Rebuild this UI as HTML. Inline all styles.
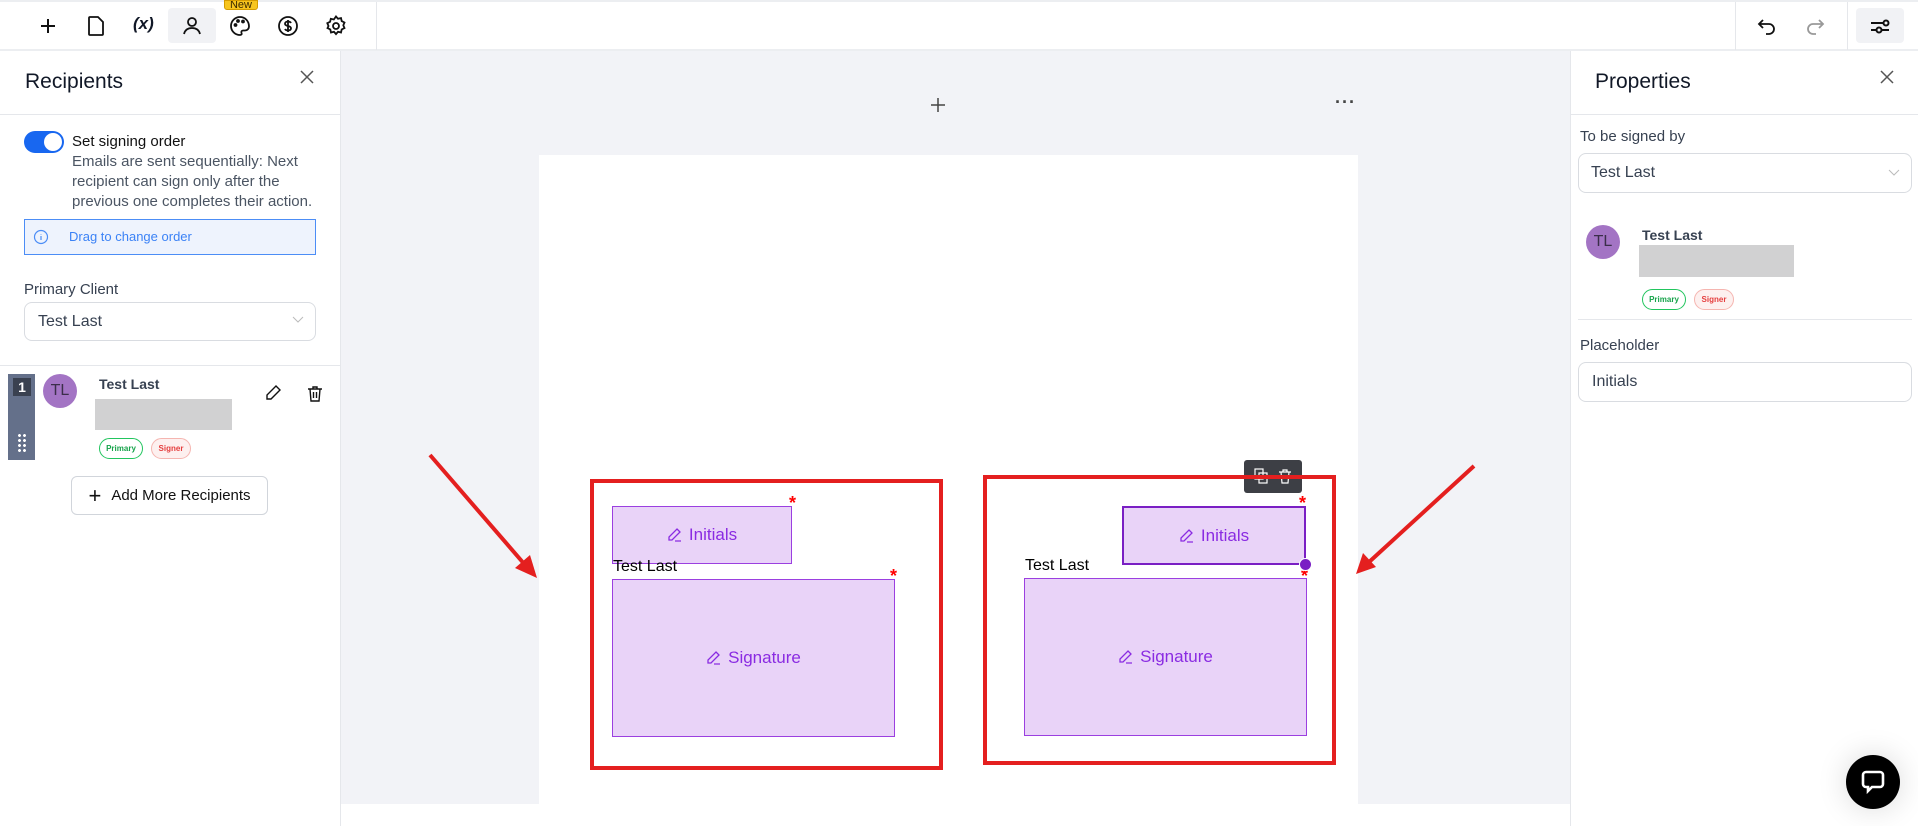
<!DOCTYPE html>
<html><head><meta charset="utf-8"><style>
*{box-sizing:border-box;margin:0;padding:0}
body{width:1918px;height:826px;position:relative;overflow:hidden;background:#fff;font-family:"Liberation Sans",sans-serif;color:#111827}
.a{position:absolute}
.ic{position:absolute;width:24px;height:24px}
.sel{position:absolute;border:1px solid #d9dce1;border-radius:8px;background:#fff;font-size:16px;color:#374151;padding-left:13px;display:flex;align-items:center}
.badge{position:absolute;height:21px;border-radius:11px;font-size:8px;font-weight:bold;display:flex;align-items:center;justify-content:center}
.fld{position:absolute;background:#e9d3f8;border:1px solid #9b3fe0;display:flex;align-items:center;justify-content:center;color:#8a2be2;font-size:17px;gap:6px}
.ast{position:absolute;color:#f00;font-size:18px;font-weight:bold}
.tl{position:absolute;font-size:16px;color:#000}
</style></head><body>
<div class="a" style="left:0;top:0;width:1918px;height:51px;border-top:2px solid #eceef1;border-bottom:2px solid #eceef1"></div>
<div class="a" style="left:376px;top:2px;width:1px;height:48px;background:#e5e7eb"></div>
<div class="a" style="left:1735px;top:2px;width:1px;height:48px;background:#e5e7eb"></div>
<div class="a" style="left:1847px;top:2px;width:1px;height:48px;background:#e5e7eb"></div>
<div class="a" style="left:168px;top:8px;width:48px;height:35px;background:#f1f2f5;border-radius:4px"></div>
<div class="a" style="left:1856px;top:8px;width:48px;height:35px;background:#f1f2f5;border-radius:4px"></div>
<div class="a" style="left:224px;top:0;width:34px;height:10px;background:#f7c51e;border:1px solid #d49b00;border-radius:0 0 3px 3px;font-size:11px;line-height:8px;text-align:center;color:#3b2a00;overflow:hidden">New</div>
<svg class="ic" style="left:36px;top:14px" viewBox="0 0 24 24" fill="none" stroke="#111" stroke-width="2"><path d="M12 5v14M5 12h14"/></svg>
<svg class="ic" style="left:84px;top:14px" viewBox="0 0 24 24" fill="none" stroke="#111" stroke-width="1.8"><path d="M6 3h8l5 5v12a1 1 0 0 1-1 1H6a1 1 0 0 1-1-1V4a1 1 0 0 1 1-1z"/></svg>
<div class="a" style="left:133px;top:14px;font-size:17px;font-weight:bold;font-style:italic">(x)</div>
<svg class="ic" style="left:180px;top:14px" viewBox="0 0 24 24" fill="none" stroke="#111" stroke-width="1.8"><circle cx="12" cy="8" r="4"/><path d="M4 20c1-4 4-6 8-6s7 2 8 6"/></svg>
<svg class="ic" style="left:228px;top:14px" viewBox="0 0 24 24" fill="none" stroke="#111" stroke-width="1.8"><path d="M12 3a9 9 0 1 0 0 18c1.5 0 2-1 1.5-2s0-2.5 1.5-2.5h2a4 4 0 0 0 4-4C21 7 17 3 12 3z"/><circle cx="7.5" cy="11" r="1"/><circle cx="10" cy="7" r="1"/><circle cx="15" cy="7.5" r="1"/></svg>
<svg class="ic" style="left:276px;top:14px" viewBox="0 0 24 24" fill="none" stroke="#111" stroke-width="1.8"><circle cx="12" cy="12" r="9"/><path d="M15 9c-.5-1-1.5-1.5-3-1.5-2 0-3 1-3 2.2s1 1.8 3 2.3 3 1 3 2.3-1 2.2-3 2.2c-1.5 0-2.5-.5-3-1.5M12 6v12"/></svg>
<svg class="ic" style="left:324px;top:14px" viewBox="0 0 24 24" fill="none" stroke="#111" stroke-width="1.8"><circle cx="12" cy="12" r="3"/><path d="M12 2.5l2 2.3 3-.7.7 3 2.8 1.4-1.2 2.8 1.2 2.8-2.8 1.4-.7 3-3-.7-2 2.3-2-2.3-3 .7-.7-3-2.8-1.4L4.5 12 3.3 9.2l2.8-1.4.7-3 3 .7z"/></svg>
<svg class="ic" style="left:1755px;top:14px" viewBox="0 0 24 24" fill="none" stroke="#111" stroke-width="1.8"><path d="M8 6L4 10l4 4M4 10h10a5 5 0 0 1 0 10h-3"/></svg>
<svg class="ic" style="left:1803px;top:14px" viewBox="0 0 24 24" fill="none" stroke="#999" stroke-width="1.8"><path d="M16 6l4 4-4 4M20 10H10a5 5 0 0 0 0 10h3"/></svg>
<svg class="ic" style="left:1868px;top:14px" viewBox="0 0 24 24" fill="none" stroke="#111" stroke-width="2"><path d="M3 9h12M3 16h5M14 16h7"/><circle cx="18" cy="9" r="2.5"/><circle cx="11" cy="16" r="2.5"/></svg>

<div class="a" style="left:0;top:51px;width:341px;height:775px;border-right:1px solid #e5e7eb;background:#fff"></div>
<div class="a" style="left:25px;top:70px;font-size:21px">Recipients</div>
<svg class="ic" style="left:298px;top:68px;width:18px;height:18px" viewBox="0 0 18 18" stroke="#555" stroke-width="1.5"><path d="M3 3l12 12M15 3L3 15"/></svg>
<div class="a" style="left:0;top:114px;width:340px;height:1px;background:#e5e7eb"></div>
<div class="a" style="left:24px;top:131px;width:40px;height:22px;background:#1867f0;border-radius:11px"><div class="a" style="left:20px;top:2px;width:18px;height:18px;border-radius:50%;background:#fff"></div></div>
<div class="a" style="left:72px;top:133px;font-size:15px;color:#111">Set signing order</div>
<div class="a" style="left:72px;top:152px;font-size:15px;line-height:20px;color:#4b5563;width:250px">Emails are sent sequentially: Next recipient can sign only after the previous one completes their action.</div>
<div class="a" style="left:24px;top:219px;width:292px;height:36px;background:#eef3fd;border:1px solid #4c8df6"></div>
<svg class="a" style="left:33px;top:229px;width:16px;height:16px" viewBox="0 0 16 16" fill="none" stroke="#4c8df6" stroke-width="1.2"><circle cx="8" cy="8" r="6.5"/><path d="M8 7v4M8 5v.5"/></svg>
<div class="a" style="left:69px;top:229px;font-size:13px;color:#3b82f6">Drag to change order</div>
<div class="a" style="left:24px;top:281px;font-size:15px;color:#374151">Primary Client</div>
<div class="sel" style="left:24px;top:302px;width:292px;height:39px">Test Last</div>
<svg class="a" style="left:292px;top:316px;width:12px;height:8px" viewBox="0 0 12 8" fill="none" stroke="#bbb"><path d="M1 1l5 5 5-5"/></svg>
<div class="a" style="left:0;top:365px;width:340px;height:1px;background:#e5e7eb"></div>
<div class="a" style="left:8px;top:374px;width:27px;height:86px;background:#64708a"></div>
<div class="a" style="left:13px;top:378px;width:18px;height:18px;background:#3a4150;color:#fff;font-weight:bold;font-size:14px;text-align:center;line-height:18px">1</div>
<div class="a" style="left:17px;top:433px;width:10px;height:20px;background:radial-gradient(circle,#fff 1.3px,transparent 1.6px) 0 0/5px 5px"></div>
<div class="a" style="left:43px;top:374px;width:34px;height:34px;border-radius:50%;background:#a374c4;color:#3b2e4a;font-size:16px;text-align:center;line-height:34px">TL</div>
<div class="a" style="left:99px;top:376px;font-size:14px;font-weight:bold;color:#374151">Test Last</div>
<div class="a" style="left:95px;top:399px;width:137px;height:31px;background:#d1d1d2"></div>
<div class="badge" style="left:99px;top:438px;width:44px;border:1px solid #22c55e;color:#16a34a">Primary</div>
<div class="badge" style="left:151px;top:438px;width:40px;border:1px solid #f5b5b0;background:#fdf0ef;color:#e53e3e">Signer</div>
<svg class="ic" style="left:263px;top:383px;width:20px;height:20px" viewBox="0 0 20 20" fill="none" stroke="#111" stroke-width="1.4"><path d="M13 3l4 4-9 9H4v-4z"/></svg>
<svg class="ic" style="left:305px;top:384px;width:20px;height:20px" viewBox="0 0 20 20" fill="none" stroke="#111" stroke-width="1.4"><path d="M3 5h14M8 5V3h4v2M5 5l1 12h8l1-12M8.5 8v6M11.5 8v6"/></svg>
<div class="a" style="left:71px;top:476px;width:197px;height:39px;border:1px solid #d1d5db;border-radius:6px;font-size:15px;color:#111;display:flex;align-items:center;justify-content:center;gap:10px"><span style="font-size:22px;font-weight:300">+</span>Add More Recipients</div>

<div class="a" style="left:341px;top:51px;width:1229px;height:753px;background:#f2f3f7"></div>
<div class="a" style="left:539px;top:155px;width:819px;height:649px;background:#fff"></div>
<svg class="ic" style="left:929px;top:96px;width:18px;height:18px" viewBox="0 0 18 18" stroke="#444" stroke-width="1.5"><path d="M9 2v14M2 9h14"/></svg>
<div class="a" style="left:1335px;top:92px;font-size:18px;color:#444;letter-spacing:1px;font-weight:bold">···</div>

<div class="a" style="left:590px;top:479px;width:353px;height:291px;border:4px solid #e41f1f"></div>
<div class="fld" style="left:612px;top:506px;width:180px;height:58px"><svg width="16" height="16" viewBox="0 0 16 16" fill="none" stroke="#8a2be2" stroke-width="1.3"><path d="M10 2l3 3-8 8H2v-3zM8 14h6"/></svg>Initials</div>
<div class="ast" style="left:789px;top:493px">*</div>
<div class="tl" style="left:613px;top:558px">Test Last</div>
<div class="fld" style="left:612px;top:579px;width:283px;height:158px"><svg width="16" height="16" viewBox="0 0 16 16" fill="none" stroke="#8a2be2" stroke-width="1.3"><path d="M10 2l3 3-8 8H2v-3zM8 14h6"/></svg>Signature</div>
<div class="ast" style="left:890px;top:566px">*</div>

<div class="a" style="left:983px;top:475px;width:353px;height:290px;border:4px solid #e41f1f"></div>
<div class="a" style="left:1244px;top:460px;width:58px;height:33px;background:#3d3f45;border-radius:3px"></div>
<svg class="a" style="left:1253px;top:468px;width:16px;height:16px" viewBox="0 0 16 16" fill="none" stroke="#fff" stroke-width="1.2"><rect x="2" y="1" width="8" height="10"/><rect x="6" y="5" width="8" height="10"/></svg>
<svg class="a" style="left:1277px;top:468px;width:16px;height:16px" viewBox="0 0 16 16" fill="none" stroke="#fff" stroke-width="1.2"><path d="M2 4h12M6 4V2h4v2M4 4l1 11h6l1-11"/></svg>
<div class="a" style="left:983px;top:475px;width:353px;height:4px;background:#e41f1f"></div>
<div class="fld" style="left:1122px;top:506px;width:184px;height:59px;border:2px solid #7a1fc4"><svg width="16" height="16" viewBox="0 0 16 16" fill="none" stroke="#8a2be2" stroke-width="1.3"><path d="M10 2l3 3-8 8H2v-3zM8 14h6"/></svg>Initials</div>
<div class="ast" style="left:1299px;top:493px">*</div>
<div class="tl" style="left:1025px;top:557px">Test Last</div>
<div class="fld" style="left:1024px;top:578px;width:283px;height:158px"><svg width="16" height="16" viewBox="0 0 16 16" fill="none" stroke="#8a2be2" stroke-width="1.3"><path d="M10 2l3 3-8 8H2v-3zM8 14h6"/></svg>Signature</div>
<div class="ast" style="left:1301px;top:566px">*</div>
<div class="a" style="left:1299px;top:558px;width:13px;height:13px;border-radius:50%;background:#7a1fc4;border:1px solid #fff"></div>

<svg class="a" style="left:0;top:0;width:1918px;height:826px" viewBox="0 0 1918 826">
<g stroke="#e41f1f" stroke-width="4" fill="#e41f1f"><line x1="430" y1="455" x2="526" y2="566"/><polygon points="537,578 515,568 530,555" stroke="none"/>
<line x1="1474" y1="466" x2="1368" y2="563"/><polygon points="1356,574 1363,553 1376,567" stroke="none"/></g></svg>

<div class="a" style="left:1570px;top:51px;width:348px;height:775px;background:#fff;border-left:1px solid #e5e7eb"></div>
<div class="a" style="left:1595px;top:70px;font-size:21px">Properties</div>
<svg class="ic" style="left:1878px;top:68px;width:18px;height:18px" viewBox="0 0 18 18" stroke="#555" stroke-width="1.5"><path d="M3 3l12 12M15 3L3 15"/></svg>
<div class="a" style="left:1570px;top:114px;width:348px;height:1px;background:#e5e7eb"></div>
<div class="a" style="left:1580px;top:128px;font-size:15px;color:#374151">To be signed by</div>
<div class="sel" style="left:1578px;top:153px;width:334px;height:40px;padding-left:12px">Test Last</div>
<svg class="a" style="left:1888px;top:169px;width:12px;height:8px" viewBox="0 0 12 8" fill="none" stroke="#bbb"><path d="M1 1l5 5 5-5"/></svg>
<div class="a" style="left:1586px;top:225px;width:34px;height:34px;border-radius:50%;background:#a374c4;color:#3b2e4a;font-size:16px;text-align:center;line-height:34px">TL</div>
<div class="a" style="left:1642px;top:227px;font-size:14px;font-weight:bold;color:#374151">Test Last</div>
<div class="a" style="left:1639px;top:245px;width:155px;height:32px;background:#d1d1d2"></div>
<div class="badge" style="left:1642px;top:289px;width:44px;border:1px solid #22c55e;color:#16a34a">Primary</div>
<div class="badge" style="left:1694px;top:289px;width:40px;border:1px solid #f5b5b0;background:#fdf0ef;color:#e53e3e">Signer</div>
<div class="a" style="left:1578px;top:319px;width:334px;height:1px;background:#e5e7eb"></div>
<div class="a" style="left:1580px;top:337px;font-size:15px;color:#374151">Placeholder</div>
<div class="sel" style="left:1578px;top:362px;width:334px;height:40px">Initials</div>

<div class="a" style="left:1846px;top:755px;width:54px;height:54px;border-radius:50%;background:#000;box-shadow:0 0 30px rgba(0,0,0,.15)"></div>
<svg class="a" style="left:1859px;top:768px;width:28px;height:28px" viewBox="0 0 28 28" fill="none" stroke="#fff" stroke-width="2.6"><path d="M7 4h14a3 3 0 0 1 3 3v9a3 3 0 0 1-3 3h-8l-4 4v-4H7a3 3 0 0 1-3-3V7a3 3 0 0 1 3-3z"/></svg>
</body></html>
